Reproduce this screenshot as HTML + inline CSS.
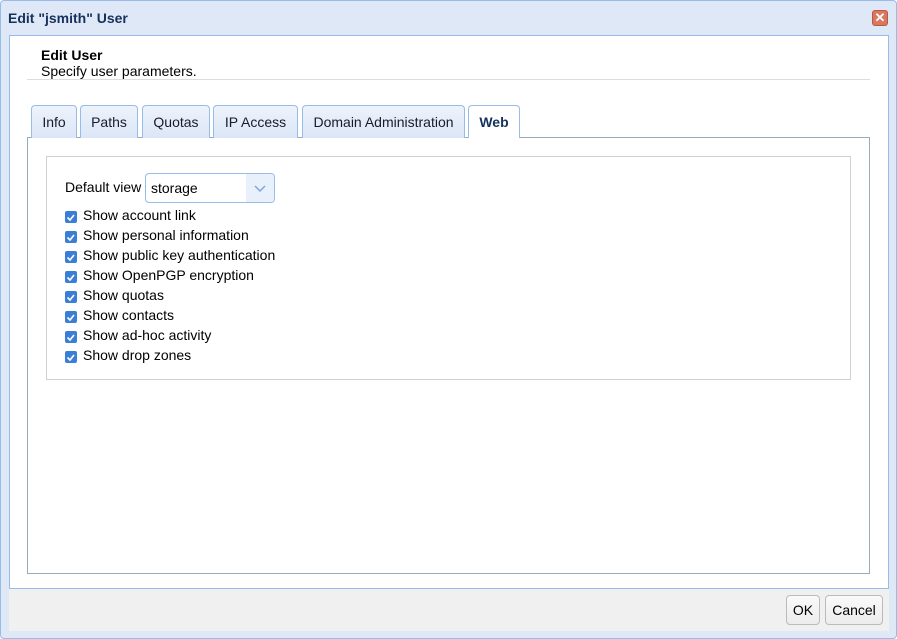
<!DOCTYPE html>
<html><head><style>
*{box-sizing:border-box;margin:0;padding:0}
body{width:897px;height:639px;font-family:"Liberation Sans",Arial,sans-serif;font-size:14px;color:#000;background:#fff;position:relative;overflow:hidden}
.win{position:absolute;left:0;top:0;width:897px;height:639px;background:#dfe8f6;border:1px solid #99bbe8;border-radius:4px}
.title{position:absolute;left:8px;top:10px;font-weight:bold;font-size:14px;color:#15325b}
.close{position:absolute;left:872px;top:10px;width:16px;height:16px;background:#d9775f;border:1px solid #b55a45;border-radius:3px;color:#fff;font-size:13px;font-weight:bold;line-height:14px;text-align:center}
.body{position:absolute;left:9px;top:35px;width:880px;height:554px;background:#fff;border:1px solid #99bbe8}
.foot{position:absolute;left:9px;top:589px;width:880px;height:42px;background:#f0f0f0}
.h1{position:absolute;left:41px;top:47px;font-weight:bold}
.h2{position:absolute;left:41px;top:63px}
.hr{position:absolute;left:27px;top:79px;width:843px;height:1px;background:#ddd}
.tab{position:absolute;top:105px;height:33px;background:linear-gradient(#eef3fb,#dbe6f7);border:1px solid #99bbe8;border-bottom:none;border-radius:4px 4px 0 0;text-align:center;line-height:32px;color:#1a1a2a}
.tab.a{background:#fff;font-weight:bold;height:33px;z-index:2;color:#15325b}
.panel{position:absolute;left:27px;top:137px;width:843px;height:437px;border:1px solid #99aabb;background:#fff}
.fs{position:absolute;left:46px;top:156px;width:805px;height:224px;border:1px solid #d0d0d0}
.lbl{position:absolute;left:65px;top:179px}
.sel{position:absolute;left:145px;top:173px;width:130px;height:30px;border:1px solid #99bbe8;border-radius:4px;padding-left:5px;line-height:28px;overflow:hidden}
.sel .ar{position:absolute;right:0;top:0;width:28px;height:28px;background:#e8f0fb}
.cb{position:absolute;left:65px;width:12px;height:12px;background:#3a7fd5;border-radius:2px}
.ct{position:absolute;left:83px}
.btn{position:absolute;top:595px;height:30px;border:1px solid #bbb;border-radius:4px;background:linear-gradient(#fafafa,#ececec);line-height:28px;text-align:center}
</style></head><body>
<div class="win"></div>
<div class="title">Edit "jsmith" User</div>
<div class="close">✕</div>
<div class="body"></div>
<div class="foot"></div>
<div class="h1">Edit User</div>
<div class="h2">Specify user parameters.</div>
<div class="hr"></div>
<div class="panel"></div>
<div class="tab" style="left:31px;width:46px">Info</div>
<div class="tab" style="left:80px;width:58px">Paths</div>
<div class="tab" style="left:142px;width:68px">Quotas</div>
<div class="tab" style="left:213px;width:85px">IP Access</div>
<div class="tab" style="left:302px;width:163px">Domain Administration</div>
<div class="tab a" style="left:468px;width:52px">Web</div>
<div class="fs"></div>
<div class="lbl">Default view</div>
<div class="sel">storage<div class="ar"><svg width="28" height="28"><path d="M9 12l5 5 5-5" stroke="#7fa6d8" stroke-width="1.5" fill="none"/></svg></div></div>
<div class="cb" style="top:211px"></div><div class="ct" style="top:207px">Show account link</div>
<div class="cb" style="top:231px"></div><div class="ct" style="top:227px">Show personal information</div>
<div class="cb" style="top:251px"></div><div class="ct" style="top:247px">Show public key authentication</div>
<div class="cb" style="top:271px"></div><div class="ct" style="top:267px">Show OpenPGP encryption</div>
<div class="cb" style="top:291px"></div><div class="ct" style="top:287px">Show quotas</div>
<div class="cb" style="top:311px"></div><div class="ct" style="top:307px">Show contacts</div>
<div class="cb" style="top:331px"></div><div class="ct" style="top:327px">Show ad-hoc activity</div>
<div class="cb" style="top:351px"></div><div class="ct" style="top:347px">Show drop zones</div>
<svg style="position:absolute;left:0;top:0" width="897" height="639">
<g stroke="#fff" stroke-width="1.6" fill="none">
<path d="M67.5 217.5l2.5 2.5 4-5"/><path d="M67.5 237.5l2.5 2.5 4-5"/><path d="M67.5 257.5l2.5 2.5 4-5"/><path d="M67.5 277.5l2.5 2.5 4-5"/><path d="M67.5 297.5l2.5 2.5 4-5"/><path d="M67.5 317.5l2.5 2.5 4-5"/><path d="M67.5 337.5l2.5 2.5 4-5"/><path d="M67.5 357.5l2.5 2.5 4-5"/>
</g></svg>
<div class="btn" style="left:786px;width:34px">OK</div>
<div class="btn" style="left:825px;width:58px">Cancel</div>
</body></html>
